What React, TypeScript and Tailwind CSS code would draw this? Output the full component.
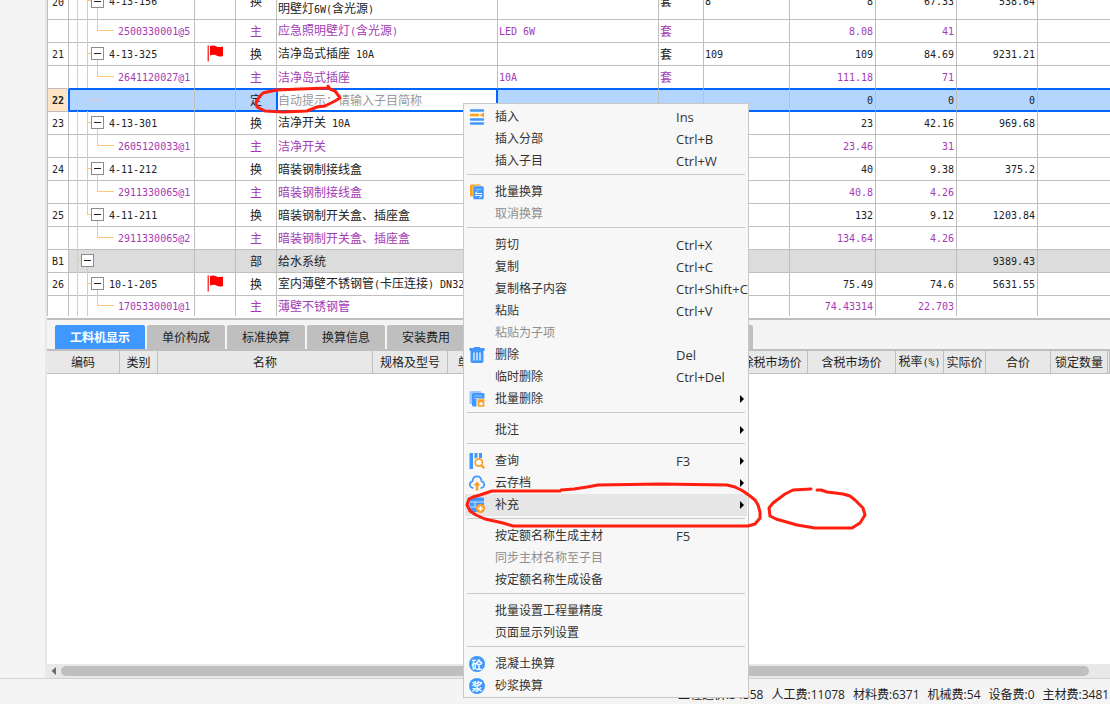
import React from 'react';
import { clsx } from 'clsx';

type RowKind = 'item' | 'material' | 'section' | 'editing';

interface CostRow {
  no?: string;
  kind: RowKind;
  code?: string;
  flag?: boolean;
  type: string;
  name: string;
  spec?: string;
  unit?: string;
  expr?: string;
  qty?: string;
  price?: string;
  total?: string;
  lastInSection?: boolean;
}

const rows: CostRow[] = [
  { no: '20', kind: 'item', code: '4-13-156', type: '换', name: '标志、诱导灯具安装 墙壁安装式 应急照\n明壁灯6W(含光源)', unit: '套', expr: '8', qty: '8', price: '67.33', total: '538.64' },
  { kind: 'material', code: '2500330001@5', type: '主', name: '应急照明壁灯(含光源)', spec: 'LED 6W', unit: '套', qty: '8.08', price: '41' },
  { no: '21', kind: 'item', code: '4-13-325', flag: true, type: '换', name: '洁净岛式插座 10A', unit: '套', expr: '109', qty: '109', price: '84.69', total: '9231.21' },
  { kind: 'material', code: '2641120027@1', type: '主', name: '洁净岛式插座', spec: '10A', unit: '套', qty: '111.18', price: '71' },
  { no: '22', kind: 'editing', type: '定', name: '', qty: '0', price: '0', total: '0' },
  { no: '23', kind: 'item', code: '4-13-301', type: '换', name: '洁净开关 10A', qty: '23', price: '42.16', total: '969.68' },
  { kind: 'material', code: '2605120033@1', type: '主', name: '洁净开关', qty: '23.46', price: '31' },
  { no: '24', kind: 'item', code: '4-11-212', type: '换', name: '暗装钢制接线盒', qty: '40', price: '9.38', total: '375.2' },
  { kind: 'material', code: '2911330065@1', type: '主', name: '暗装钢制接线盒', qty: '40.8', price: '4.26' },
  { no: '25', kind: 'item', code: '4-11-211', type: '换', name: '暗装钢制开关盒、插座盒', qty: '132', price: '9.12', total: '1203.84', lastInSection: true },
  { kind: 'material', code: '2911330065@2', type: '主', name: '暗装钢制开关盒、插座盒', qty: '134.64', price: '4.26', lastInSection: true },
  { no: 'B1', kind: 'section', type: '部', name: '给水系统', total: '9389.43' },
  { no: '26', kind: 'item', code: '10-1-205', flag: true, type: '换', name: '室内薄壁不锈钢管(卡压连接) DN32', qty: '75.49', price: '74.6', total: '5631.55' },
  { kind: 'material', code: '1705330001@1', type: '主', name: '薄壁不锈钢管', qty: '74.43314', price: '22.703' },
];

const tabs = ['工料机显示', '单价构成', '标准换算', '换算信息', '安装费用', '特征及内容', '工程量明细', '反查图形工程量'];

const totals = [
  ['工程造价', '34358'],
  ['人工费', '11078'],
  ['材料费', '6371'],
  ['机械费', '54'],
  ['设备费', '0'],
  ['主材费', '34815'],
];

interface MenuEntry {
  label: string;
  keys?: string;
  icon?: React.ReactNode;
  disabled?: boolean;
  submenu?: boolean;
  active?: boolean;
}

const BLUE = '#4098ff';
const ORANGE = '#ff9f1c';

function InsertIcon() {
  return (
    <svg width="16" height="16" viewBox="0 0 16 16" aria-hidden="true">
      <g strokeWidth="2.4" strokeLinecap="round">
        <path d="M2 1.5H14M2 10.5H14M2 14.5H14" stroke={BLUE} />
        <path d="M2 6H9" stroke={ORANGE} />
      </g>
      <path d="M10.5 6 15 3.5v5z" fill={ORANGE} />
    </svg>
  );
}

function BatchConvertIcon() {
  return (
    <svg width="16" height="16" viewBox="0 0 16 16" aria-hidden="true">
      <rect x="1" y="0.5" width="11" height="12" rx="1.5" fill={ORANGE} />
      <rect x="4" y="2" width="11" height="13.5" rx="1.5" fill={BLUE} stroke="#f7f7f7" strokeWidth="0.5" />
      <path d="M6.5 5.5h6" stroke="#9bc9ff" strokeWidth="1" />
      <path d="M6 9.5h7M6 9.5 8.500 7.500M6 11.500h7M13 11.500 10.500 13.500" stroke="white" strokeWidth="1" fill="none" />
    </svg>
  );
}

function TrashIcon() {
  return (
    <svg width="16" height="16" viewBox="0 0 16 16" aria-hidden="true" fill={BLUE}>
      <path d="M5 0h6v1h4.500v3h-15V1H5z" />
      <path d="M1.500 3.500h13V14a2 2 0 0 1-2 2h-9a2 2 0 0 1-2-2z" />
      <path d="M5 5.500v8M8 5.500v8M11 5.500v8" stroke="white" strokeWidth="1.2" />
    </svg>
  );
}

function BatchDeleteIcon() {
  return (
    <svg width="16" height="16" viewBox="0 0 16 16" aria-hidden="true">
      <rect x="0.5" y="0" width="12" height="13" rx="1.5" fill="#9bc9ff" />
      <rect x="3" y="2" width="12.500" height="13.500" rx="1.5" fill={BLUE} />
      <path d="M5 5h8M5 7.500h4" stroke="#9bc9ff" strokeWidth="1" />
      <path d="M7.500 7.500h8.500V16H7.500z" fill="#f7f7f7" />
      <path d="M8.500 9h7M9.500 10.500h5v4.500h-5z" stroke={ORANGE} strokeWidth="1.6" fill="none" />
    </svg>
  );
}

function QueryIcon() {
  return (
    <svg width="16" height="16" viewBox="0 0 16 16" aria-hidden="true">
      <path d="M0.5 0h3.5v16H0.5zM5.5 0h3v4.500l-3 1zM10 0h3v5h-3z" fill={BLUE} />
      <circle cx="9.8" cy="9.5" r="3.6" fill="white" stroke={ORANGE} strokeWidth="1.7" />
      <path d="m12.3 12.3 3 3" stroke={ORANGE} strokeWidth="2" />
    </svg>
  );
}

function CloudIcon() {
  return (
    <svg width="16" height="16" viewBox="0 0 16 16" aria-hidden="true" fill="none">
      <path d="M4.5 13C2.3 13 .8 11.500.8 9.500c0-1.800 1.200-3 2.700-3.400C3.700 3.200 5.500 1.300 8 1.300s4.300 1.900 4.500 4.800c1.500.4 2.700 1.600 2.700 3.400 0 2-1.500 3.500-3.700 3.500" stroke={BLUE} strokeWidth="1.7" />
      <path d="M8 6.500 11.500 10.500H9.200V15.500H6.800V10.500H4.500z" fill={ORANGE} />
    </svg>
  );
}

function SupplementIcon() {
  return (
    <svg width="16" height="16" viewBox="0 0 16 16" aria-hidden="true">
      <rect x="0.500" y="0.500" width="14.500" height="14.500" rx="1" fill={BLUE} />
      <path d="M0.500 5h14.500M0.500 10h8M6 5v5" stroke="#cfe4ff" strokeWidth="1" />
      <circle cx="11.500" cy="11.500" r="4.500" fill={ORANGE} />
      <path d="M11.500 9v5M9 11.500h5" stroke="white" strokeWidth="1.500" />
    </svg>
  );
}

function GlyphIcon({ glyph }: { glyph: string }) {
  return (
    <span className="flex size-4 items-center justify-center rounded-full bg-[#4098ff] text-[11px] leading-none font-bold text-white">
      {glyph}
    </span>
  );
}

const menuGroups: MenuEntry[][] = [
  [
    { label: '插入', keys: 'Ins', icon: <InsertIcon /> },
    { label: '插入分部', keys: 'Ctrl+B' },
    { label: '插入子目', keys: 'Ctrl+W' },
  ],
  [
    { label: '批量换算', icon: <BatchConvertIcon /> },
    { label: '取消换算', disabled: true },
  ],
  [
    { label: '剪切', keys: 'Ctrl+X' },
    { label: '复制', keys: 'Ctrl+C' },
    { label: '复制格子内容', keys: 'Ctrl+Shift+C' },
    { label: '粘贴', keys: 'Ctrl+V' },
    { label: '粘贴为子项', disabled: true },
    { label: '删除', keys: 'Del', icon: <TrashIcon /> },
    { label: '临时删除', keys: 'Ctrl+Del' },
    { label: '批量删除', icon: <BatchDeleteIcon />, submenu: true },
  ],
  [{ label: '批注', submenu: true }],
  [
    { label: '查询', keys: 'F3', icon: <QueryIcon />, submenu: true },
    { label: '云存档', icon: <CloudIcon />, submenu: true },
    { label: '补充', icon: <SupplementIcon />, submenu: true, active: true },
  ],
  [
    { label: '按定额名称生成主材', keys: 'F5' },
    { label: '同步主材名称至子目', disabled: true },
    { label: '按定额名称生成设备' },
  ],
  [{ label: '批量设置工程量精度' }, { label: '页面显示列设置' }],
  [
    { label: '混凝土换算', icon: <GlyphIcon glyph="砼" /> },
    { label: '砂浆换算', icon: <GlyphIcon glyph="浆" /> },
  ],
];

// Half-width characters take half the advance of a Chinese one, as in the grid's bitmap font
function GridText({ text }: { text: string }) {
  const parts = text.split(/([\x20-\x7e]+)/).filter(Boolean);
  return (
    <>
      {parts.map((part, i) =>
        /^[\x20-\x7e]/.test(part) ? (
          <span key={i} className="font-['DejaVu_Sans_Mono',monospace] text-[10px] whitespace-pre">
            {part}
          </span>
        ) : (
          <span key={i}>{part}</span>
        )
      )}
    </>
  );
}

function TreeLines({ row }: { row: CostRow }) {
  const last = row.lastInSection;
  const className = 'absolute -top-px left-0 h-full w-12 overflow-visible';

  if (row.kind === 'editing') {
    return (
      <svg className={className} aria-hidden="true" stroke="#ffc57a" strokeOpacity="0.5" shapeRendering="crispEdges">
        <line x1="18" y1="50%" x2="35" y2="50%" />
      </svg>
    );
  }

  return (
    <svg className={className} aria-hidden="true" stroke="#ffc57a" shapeRendering="crispEdges">
      <line x1="8.5" y1="0" x2="8.5" y2="105%" />
      {row.kind === 'section' ? (
        <>
          <line x1="8" y1="50%" x2="12" y2="50%" />
          <line x1="18.5" y1="50%" x2="18.5" y2="105%" />
        </>
      ) : (
        !(last && row.kind === 'material') && <line x1="18.5" y1="0" x2="18.5" y2={last ? '50%' : '105%'} />
      )}
      {row.kind === 'item' && (
        <>
          <line x1="18" y1="50%" x2="23" y2="50%" />
          <line x1="28.5" y1="50%" x2="28.5" y2="105%" />
        </>
      )}
      {row.kind === 'material' && (
        <>
          <line x1="28.5" y1="0" x2="28.5" y2="50%" />
          <line x1="28" y1="50%" x2="45" y2="50%" />
        </>
      )}
    </svg>
  );
}

function CollapseButton() {
  return (
    <button
      type="button"
      aria-label="折叠"
      className="relative flex size-[13px] shrink-0 items-center justify-center border border-[#8c8c8c] bg-white"
    >
      <span className="h-px w-[7px] bg-[#222]" />
    </button>
  );
}

function FlagIcon() {
  return (
    <svg width="17" height="17" viewBox="0 0 17 17" className="mx-auto block" role="img" aria-label="标记">
      <path d="M0.500 0.500h1.500v16H0.500z" fill="#ff3b3b" />
      <path d="M3 1C6 0 8 .5 9.500 1.500 11 2.500 13.500 2 16 1.500V11c-2.500.8-4.500.8-6-.2C8 9.500 6 9.500 3 10.500z" fill="#ff0000" />
    </svg>
  );
}

function GridRow({ row, beforeEditing, isLast }: { row: CostRow; beforeEditing: boolean; isLast: boolean }) {
  const editing = row.kind === 'editing';
  const base = clsx(
    'border-r px-0 pt-0 pb-px',
    !isLast && 'border-b',
    editing || beforeEditing ? 'border-b-[#0066ff]' : 'border-b-[#bfbfbf]'
  );
  const cell = clsx(
    base,
    'border-r-[#bfbfbf]',
    editing && 'bg-[#b4d5ff] shadow-[inset_0_1px_#0066ff,inset_0_-1px_#0066ff]',
    row.kind === 'section' && 'bg-[#dcdcdc]'
  );
  const height = row.no === '20' ? 'h-9' : isLast ? 'h-5' : 'h-[23px]';

  return (
    <tr className={clsx(height, row.kind === 'material' ? 'text-[#a33bb5]' : 'text-[#222]')}>
      <td
        className={clsx(
          'border-r border-b border-l border-[#bfbfbf] p-0 text-center',
          isLast && 'border-b-0',
          editing && 'border-r-[#0066ff] bg-[#ffe5c8] font-bold'
        )}
      >
        {row.no && <GridText text={row.no} />}
      </td>
      <td className={clsx(cell, 'relative', editing && 'shadow-[inset_1px_1px_#0066ff,inset_0_-1px_#0066ff]')}>
        <TreeLines row={row} />
        <div
          className={clsx(
            'flex items-center gap-[5px] leading-3',
            row.kind === 'material' ? 'pl-[49px]' : row.kind === 'section' ? 'pl-3' : 'pl-[22px]'
          )}
        >
          {(row.kind === 'item' || row.kind === 'section') && <CollapseButton />}
          {row.code && (
            <span>
              <GridText text={row.code} />
            </span>
          )}
        </div>
      </td>
      <td className={cell}>{row.flag && <FlagIcon />}</td>
      {editing ? (
        <>
          <td
            className={clsx(
              base,
              'border-r-[#0066ff] bg-[#b4d5ff] text-center shadow-[inset_0_1px_#0066ff,inset_0_-1px_#0066ff]'
            )}
          >
            {row.type}
          </td>
          <td className={clsx(base, 'border-r-[#0066ff] bg-white shadow-[inset_1px_1px_#0066ff,inset_-1px_-1px_#0066ff]')}>
            <input
              type="text"
              aria-label="子目名称"
              placeholder="自动提示：请输入子目简称"
              className="block h-5 w-full bg-transparent px-px text-xs placeholder:text-[#999] focus:outline-none"
            />
          </td>
        </>
      ) : (
        <>
          <td className={clsx(cell, 'text-center')}>{row.type}</td>
          <td className={clsx(cell, 'overflow-hidden pl-px whitespace-pre')}>
            <GridText text={row.name} />
          </td>
        </>
      )}
      <td className={clsx(cell, 'pl-px')}>{row.spec && <GridText text={row.spec} />}</td>
      <td className={clsx(cell, 'pl-px')}>{row.unit}</td>
      <td className={clsx(cell, 'pl-px')}>{row.expr && <GridText text={row.expr} />}</td>
      <td className={clsx(cell, 'pr-[2px] text-right')}>{row.qty && <GridText text={row.qty} />}</td>
      <td className={clsx(cell, 'pr-[2px] text-right')}>{row.price && <GridText text={row.price} />}</td>
      <td className={clsx(cell, 'pr-[2px] text-right')}>{row.total && <GridText text={row.total} />}</td>
      <td className={clsx(cell, 'border-r-0')} />
    </tr>
  );
}

function CostGrid() {
  return (
    <div className="shrink-0 overflow-hidden border-b-2 border-[#bfbfbf] bg-white pb-[2px]">
      <table className="-mt-4 w-full table-fixed border-separate border-spacing-0 text-xs leading-[14px]">
        <colgroup>
          <col className="w-[22px]" />
          <col className="w-[126px]" />
          <col className="w-[41px]" />
          <col className="w-[41px]" />
          <col className="w-[221px]" />
          <col className="w-[161px]" />
          <col className="w-[45px]" />
          <col className="w-[86px]" />
          <col className="w-[86px]" />
          <col className="w-[81px]" />
          <col className="w-[81px]" />
          <col />
        </colgroup>
        <tbody>
          {rows.map((row, i) => (
            <GridRow
              key={i}
              row={row}
              beforeEditing={rows[i + 1]?.kind === 'editing'}
              isLast={i === rows.length - 1}
            />
          ))}
        </tbody>
      </table>
    </div>
  );
}

function DetailPanel() {
  const head = 'border-r border-b border-[#bfbfbf] p-0 text-center font-normal whitespace-nowrap overflow-hidden';
  return (
    <>
      <div role="tablist" className="flex shrink-0 gap-[2px] border-b-2 border-[#bfbfbf] bg-[#f4f4f4] pt-[5px] pl-2">
        {tabs.map((tab, i) => (
          <button
            key={tab}
            type="button"
            role="tab"
            aria-selected={i === 0}
            className={clsx(
              'h-6 shrink-0 rounded-t-xs text-xs',
              i === 0 && 'w-[90px] bg-[#4098ff] font-bold text-white',
              i > 0 && 'bg-[#bfbfbf] text-[#222]',
              i > 0 && (i === tabs.length - 1 ? 'w-[126px]' : 'w-[78px]')
            )}
          >
            {tab}
          </button>
        ))}
      </div>
      <div className="min-h-0 flex-1 overflow-hidden bg-white">
        <table className="w-full table-fixed border-separate border-spacing-0 bg-[#e8e8e8] text-xs leading-[14px] text-[#222]">
          <colgroup>
            <col className="w-[73px]" />
            <col className="w-[38px]" />
            <col className="w-[215px]" />
            <col className="w-[75px]" />
            <col className="w-[44px]" />
            <col className="w-[60px]" />
            <col className="w-[60px]" />
            <col className="w-[60px]" />
            <col className="w-[64px]" />
            <col className="w-[72px]" />
            <col className="w-[88px]" />
            <col className="w-12" />
            <col className="w-[42px]" />
            <col className="w-[65px]" />
            <col className="w-[57px]" />
            <col />
          </colgroup>
          <thead>
            <tr className="h-[23px]">
              {['编码', '类别', '名称', '规格及型号', '单位', '损耗率', '含量', '数量', '定额价', '除税市场价', '含税市场价', '税率(%)', '实际价', '合价', '锁定数量', ''].map(
                (title, i) => (
                  <th key={i} className={head}>
                    <GridText text={title} />
                  </th>
                )
              )}
            </tr>
          </thead>
        </table>
      </div>
      <div className="flex h-[14px] shrink-0 items-center bg-[#e8e8e8] pr-[21px] pl-1">
        <button type="button" aria-label="向左滚动" className="flex w-[10px] shrink-0">
          <svg width="5" height="8" viewBox="0 0 5 8" fill="#6b6b75" aria-hidden="true">
            <path d="M5 0v8L0.500 4z" />
          </svg>
        </button>
        <div className="h-[10px] flex-1 rounded-full bg-[#bfbfbf]" />
      </div>
    </>
  );
}

function ContextMenu() {
  return (
    <div
      role="menu"
      className="absolute top-[103px] left-[463px] w-[286px] border border-[#c8c8c8] bg-[#f7f7f7] px-px pt-[2px] text-xs text-[#333]"
    >
      {menuGroups.map((group, g) => (
        <React.Fragment key={g}>
          {g > 0 && <div role="separator" className="mx-[2px] mt-[2px] mb-[6px] h-px bg-[#c8c8c8]" />}
          {group.map(entry => (
            <button
              key={entry.label}
              type="button"
              role="menuitem"
              disabled={entry.disabled}
              className={clsx(
                'grid h-[22px] w-full grid-cols-[26px_181px_1fr] items-center pl-1 text-left whitespace-nowrap',
                entry.disabled && 'text-[#8e8e8e]',
                entry.active && 'bg-[#e6e6e6]'
              )}
            >
              <span>{entry.icon}</span>
              <span>{entry.label}</span>
              <span className="flex items-center text-[13px] leading-4">
                {entry.keys}
                {entry.submenu && (
                  <svg width="4" height="8" viewBox="0 0 4 8" className="mr-[3px] ml-auto" aria-hidden="true">
                    <path d="M0 0 4 4 0 8z" fill="black" />
                  </svg>
                )}
              </span>
            </button>
          ))}
        </React.Fragment>
      ))}
    </div>
  );
}

// Hand-drawn pen marks that lie over the whole window
function PenMarks() {
  return (
    <svg
      className="pointer-events-none absolute top-0 left-0"
      width="1110"
      height="704"
      fill="none"
      stroke="#ff1e0f"
      strokeWidth="3"
      strokeLinecap="round"
      strokeLinejoin="round"
      aria-hidden="true"
    >
      <path d="M328 86 330 89 335 91 338 95 340 98 335 101 329 104 325 106 317 107 312 109 307 111 283 112 265 111 257 107 256 103 259 97 263 93 267 92 277 90 300 89 328 88" />
      <path d="M561 490 574 489 587 487 598 485 660 484 727 485 735 487 743 491 750 496 755 500 758 505 760 512 760 518 755 524 748 526 627 526 513 526 503 523 485 519 476 515 470 511 467 505 469 499 473 497 480 495 492 491 560 491" />
      <path d="M811 489 793 490 785 494 773 503 769 508 770 516 776 519 783 521 797 525 815 528 852 528 860 523 865 515 863 508 855 500 850 496 843 494 827 492 821 490 817 490" />
    </svg>
  );
}

export default function App() {
  return (
    <div className="relative flex h-screen flex-col overflow-hidden bg-[#f4f4f4] font-['Open_Sans','Noto_Sans_CJK_SC',sans-serif]">
      <div className="flex min-h-0 flex-1">
        <aside className="w-[47px] shrink-0 border-r-2 border-[#e8e8e8]" />
        <main className="flex min-w-0 flex-1 flex-col font-['Noto_Sans_CJK_SC',sans-serif]">
          <CostGrid />
          <DetailPanel />
        </main>
      </div>
      <footer className="flex h-[26px] shrink-0 items-center justify-end overflow-hidden border-t border-[#d0d0d0] pt-[7px] text-xs text-[#222]">
        <div className="flex w-[432px] shrink-0 gap-2 whitespace-nowrap">
          {totals.map(([label, value]) => (
            <span key={label}>
              {label}:{value}
            </span>
          ))}
        </div>
      </footer>
      <ContextMenu />
      <PenMarks />
    </div>
  );
}
